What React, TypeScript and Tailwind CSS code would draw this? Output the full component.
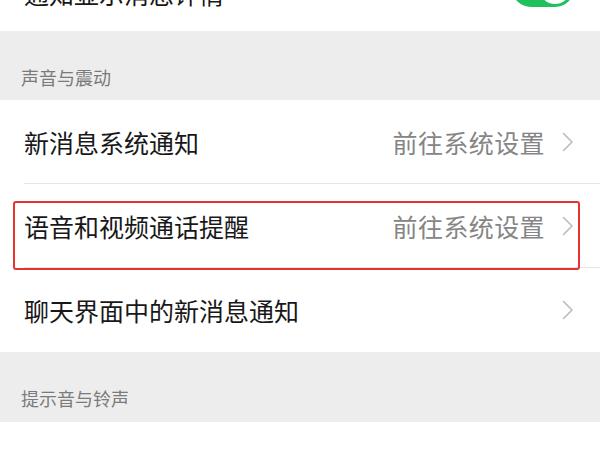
const font = { fontFamily: '"Noto Sans CJK SC", "Noto Sans", sans-serif' }

function Chevron() {
  return (
    <svg width="12" height="20" viewBox="0 0 12 20" fill="none" className="shrink-0">
      <path d="M1.5 1.5 L10 10 L1.5 18.5" stroke="#bcbcbc" strokeWidth="1.6" strokeLinecap="round" strokeLinejoin="round" />
    </svg>
  )
}

function Row({ label, value, last }: { label: string; value?: string; last?: boolean }) {
  return (
    <div className="relative flex h-[84px] items-center bg-white pl-6 pr-[26px]">
      <span className="text-[25px] leading-none text-[#181818]">{label}</span>
      <div className="ml-auto flex items-center gap-[17px]">
        {value && <span className="text-[25px] leading-none tracking-[0.4px] text-[#858585]">{value}</span>}
        <Chevron />
      </div>
      {!last && <div className="absolute bottom-0 left-6 right-0 h-px bg-[#e6e6e6]" />}
    </div>
  )
}

export default function App() {
  return (
    <div className="relative h-[449px] w-[600px] overflow-hidden bg-white" style={font}>
      <div className="h-[31px] overflow-hidden bg-white">
        <div className="-mt-[31px] flex h-[48px] items-center pl-6 pr-[26px]">
          <span className="text-[25px] leading-none text-[#181818]">通知显示消息详情</span>
          <div className="mb-[10px] ml-auto flex h-[38px] w-[62px] items-center justify-end rounded-full bg-[#1fc15e] pr-[3px]">
            <div className="h-[32px] w-[32px] rounded-full bg-white" />
          </div>
        </div>
      </div>

      <div className="flex h-[69px] items-end bg-[#ededed] pb-[14px] pl-[21px]">
        <span className="text-[18px] leading-none text-[#7b7b7b]">声音与震动</span>
      </div>

      <Row label="新消息系统通知" value="前往系统设置" />
      <Row label="语音和视频通话提醒" value="前往系统设置" />
      <Row label="聊天界面中的新消息通知" last />

      <div className="flex h-[70px] items-end bg-[#ededed] pb-[15px] pl-[21px]">
        <span className="text-[18px] leading-none text-[#7b7b7b]">提示音与铃声</span>
      </div>
      <div className="h-[29px] bg-white" />

      <div className="absolute left-[13px] top-[201px] h-[69px] w-[567px] rounded-[3px] border-2 border-[#e8322f]" />
    </div>
  )
}
